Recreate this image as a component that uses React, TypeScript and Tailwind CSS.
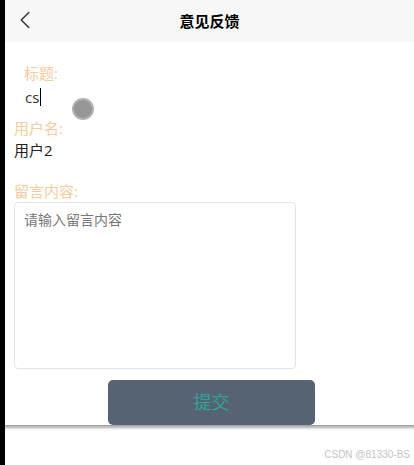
import { ChevronLeft } from "lucide-react";

export default function App() {
  return (
    <div className="flex h-[465px] w-[414px] overflow-hidden bg-white font-['Open_Sans','Noto_Sans_CJK_SC',sans-serif]">
      <div className="w-[5px] shrink-0 bg-black" />
      <div className="relative flex flex-1 flex-col">
        <div className="relative flex h-[42px] items-center justify-center bg-[#f7f7f7]">
          <ChevronLeft className="absolute left-[5px] top-[5px] h-[30px] w-[30px] text-[#333]" strokeWidth={1.2} />
          <span className="text-[15px] font-bold text-black">意见反馈</span>
        </div>

        <div className="flex flex-col pl-[9px]">
          <div className="mt-[21px] pl-[10px] text-[15px] leading-[20px] text-[#f6cc9c]">标题:</div>
          <div className="mt-[4px] flex items-center pl-[11px] text-[15px] leading-[20px] text-[#333]">
            cs<span className="ml-[1px] inline-block h-[18px] w-[1px] bg-black" />
          </div>
          <div className="mt-[11px] text-[15px] leading-[20px] text-[#f6cc9c]">用户名:</div>
          <div className="mt-[2px] text-[15px] leading-[20px] text-[#222]">用户2</div>
          <div className="mt-[21px] text-[15px] leading-[20px] text-[#f6cc9c]">留言内容:</div>
          <div className="mt-[1px] h-[167px] w-[282px] rounded-[4px] border border-[#e3e3e3] px-[9px] py-[7px] text-[14px] leading-[20px] text-[#777]">
            请输入留言内容
          </div>
          <div className="mt-[11px] flex justify-center pr-[9px]">
            <div className="ml-[4px] flex h-[45px] w-[207px] items-center justify-center rounded-[5px] bg-[#556372] text-[18px] text-[#2fa39a]">
              提交
            </div>
          </div>
        </div>

        <div className="h-[5px] bg-gradient-to-b from-[#9a9a9a] to-white" />
        <div className="mt-[17px] pr-[4px] text-right text-[10px] text-[#c4c4c4] font-['Liberation_Sans',sans-serif]">
          CSDN @81330-BS
        </div>

        <div className="absolute left-[67px] top-[98px] h-[22px] w-[22px] rounded-full border-2 border-[#b0b0b0] bg-[#979797]" />
      </div>
    </div>
  );
}
